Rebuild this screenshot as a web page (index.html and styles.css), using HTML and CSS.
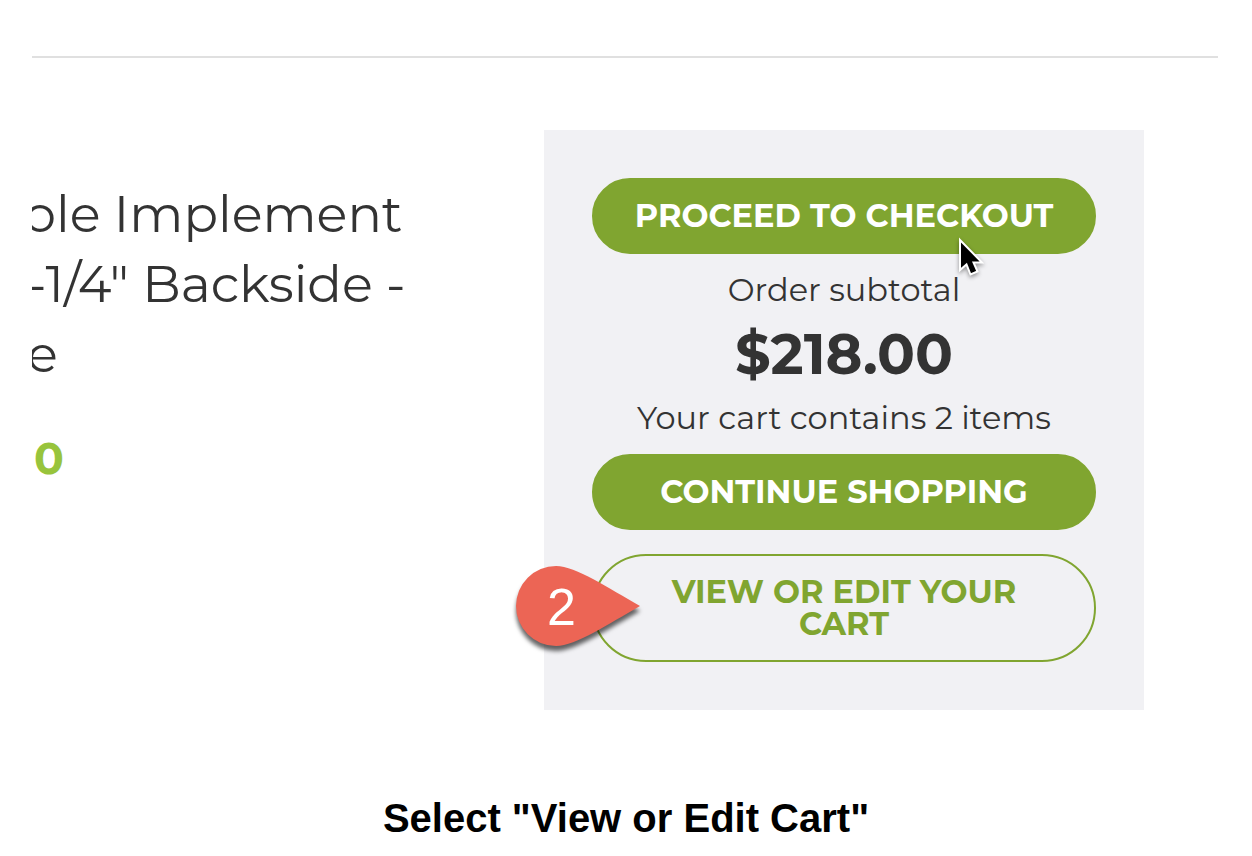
FILE: index.html
```html
<!DOCTYPE html>
<html lang="en">
<head>
  <meta charset="UTF-8" />
  <meta name="viewport" content="width=device-width, initial-scale=1.0"/>
  <title>Shopping Cart</title>
  <link rel="stylesheet" href="styles.css">
</head>
<body>

  <main class="cart">
    <!-- Added product -->
    <section class="product">
      <h2 class="product-name">
        <span class="line cut">ole Implement</span>
        <span class="line cut-sm">-1/4" Backside -</span>
        <span class="line cut-sm">e</span>
      </h2>
      <p class="price">0</p>
    </section>

    <!-- Order summary -->
    <section class="summary">
      <button class="btn" type="button">PROCEED TO CHECKOUT
        <svg class="cursor" width="32" height="44" viewBox="0 0 32 44" aria-hidden="true">
          <path d="M4 4 L4 34 L10.500 28.500 L14.500 38.500 L21.500 35.500 L17.500 26.500 L26 26.500 Z" fill="#000" stroke="#fff" stroke-width="2"/>
        </svg>
      </button>
      <div class="totals">
        <p>Order subtotal</p>
        <strong class="amount">$218.00</strong>
        <p>Your cart contains 2 items</p>
      </div>
      <button class="btn" type="button">CONTINUE SHOPPING</button>
      <button class="btn btn-outline" type="button">VIEW OR EDIT YOUR CART
        <span class="marker">
          <svg width="124" height="80" viewBox="0 0 124 80" aria-hidden="true">
            <path d="M124 40 C92 58 60 80 40 80 A40 40 0 0 1 40 0 C60 0 92 22 124 40 Z" fill="#ec6555"/>
          </svg>
          <span class="marker-num">2</span>
        </span>
      </button>
    </section>
  </main>

  <p class="caption">Select "View or Edit Cart"</p>

</body>
</html>
```

FILE: styles.css
```css
* {
  box-sizing: border-box;
}
body {
  margin: 0;
  background: #fff;
  color: #333;
  font-family: Montserrat, Inter, sans-serif;
}
h2, p {
  margin: 0;
}
.cart {
  display: grid;
  grid-template-columns: 1fr minmax(0, 674px);
  margin: 56px 34px 0 32px;
  padding-top: 72px;
  border-top: 2px solid #e0e0e0;
}
.product {
  overflow: hidden;
  padding-top: 49px;
}
.product-name {
  font-size: 51px;
  line-height: 70px;
  font-weight: 400;
}
.line {
  display: block;
  white-space: nowrap;
}
.cut {
  text-indent: -8px;
}
.cut-sm {
  text-indent: -5px;
}
.price {
  margin-top: 34px;
  padding-left: 2px;
  font-size: 44px;
  line-height: 70px;
  font-weight: 700;
  color: #98c43c;
}
.summary {
  margin-right: 74px;
  padding: 48px;
  background: #f1f1f4;
  text-align: center;
}
.btn {
  position: relative;
  display: block;
  width: 100%;
  padding: 20px 40px;
  border: 2px solid #80a530;
  border-radius: 54px;
  background: #80a530;
  color: #fff;
  font-family: inherit;
  font-size: 32px;
  line-height: 32px;
  font-weight: 700;
  cursor: pointer;
}
.btn-outline {
  margin-top: 24px;
  background: transparent;
  color: #80a530;
}
.totals {
  display: flex;
  flex-direction: column;
  gap: 4px;
  padding: 12px 0;
  font-size: 32px;
  line-height: 48px;
  font-weight: 400;
}
.amount {
  font-size: 56px;
  line-height: 72px;
  font-weight: 700;
}
.cursor {
  position: absolute;
  right: 106px;
  top: 56px;
  z-index: 1;
  filter: drop-shadow(0 2px 2px rgba(0, 0, 0, 0.4));
}
.marker {
  position: absolute;
  left: -78px;
  top: 10px;
}
.marker svg {
  display: block;
  filter: drop-shadow(0 5px 2px rgba(0, 0, 0, 0.6));
}
.marker-num {
  position: absolute;
  left: 31px;
  top: 15px;
  color: #fff;
  font-family: "Liberation Sans", sans-serif;
  font-size: 52px;
  line-height: 52px;
  font-weight: 400;
}
.caption {
  padding: 84px 16px 12px;
  font-family: "Liberation Sans", sans-serif;
  font-size: 40px;
  line-height: 48px;
  font-weight: 700;
  text-align: center;
  color: #000;
}
```
